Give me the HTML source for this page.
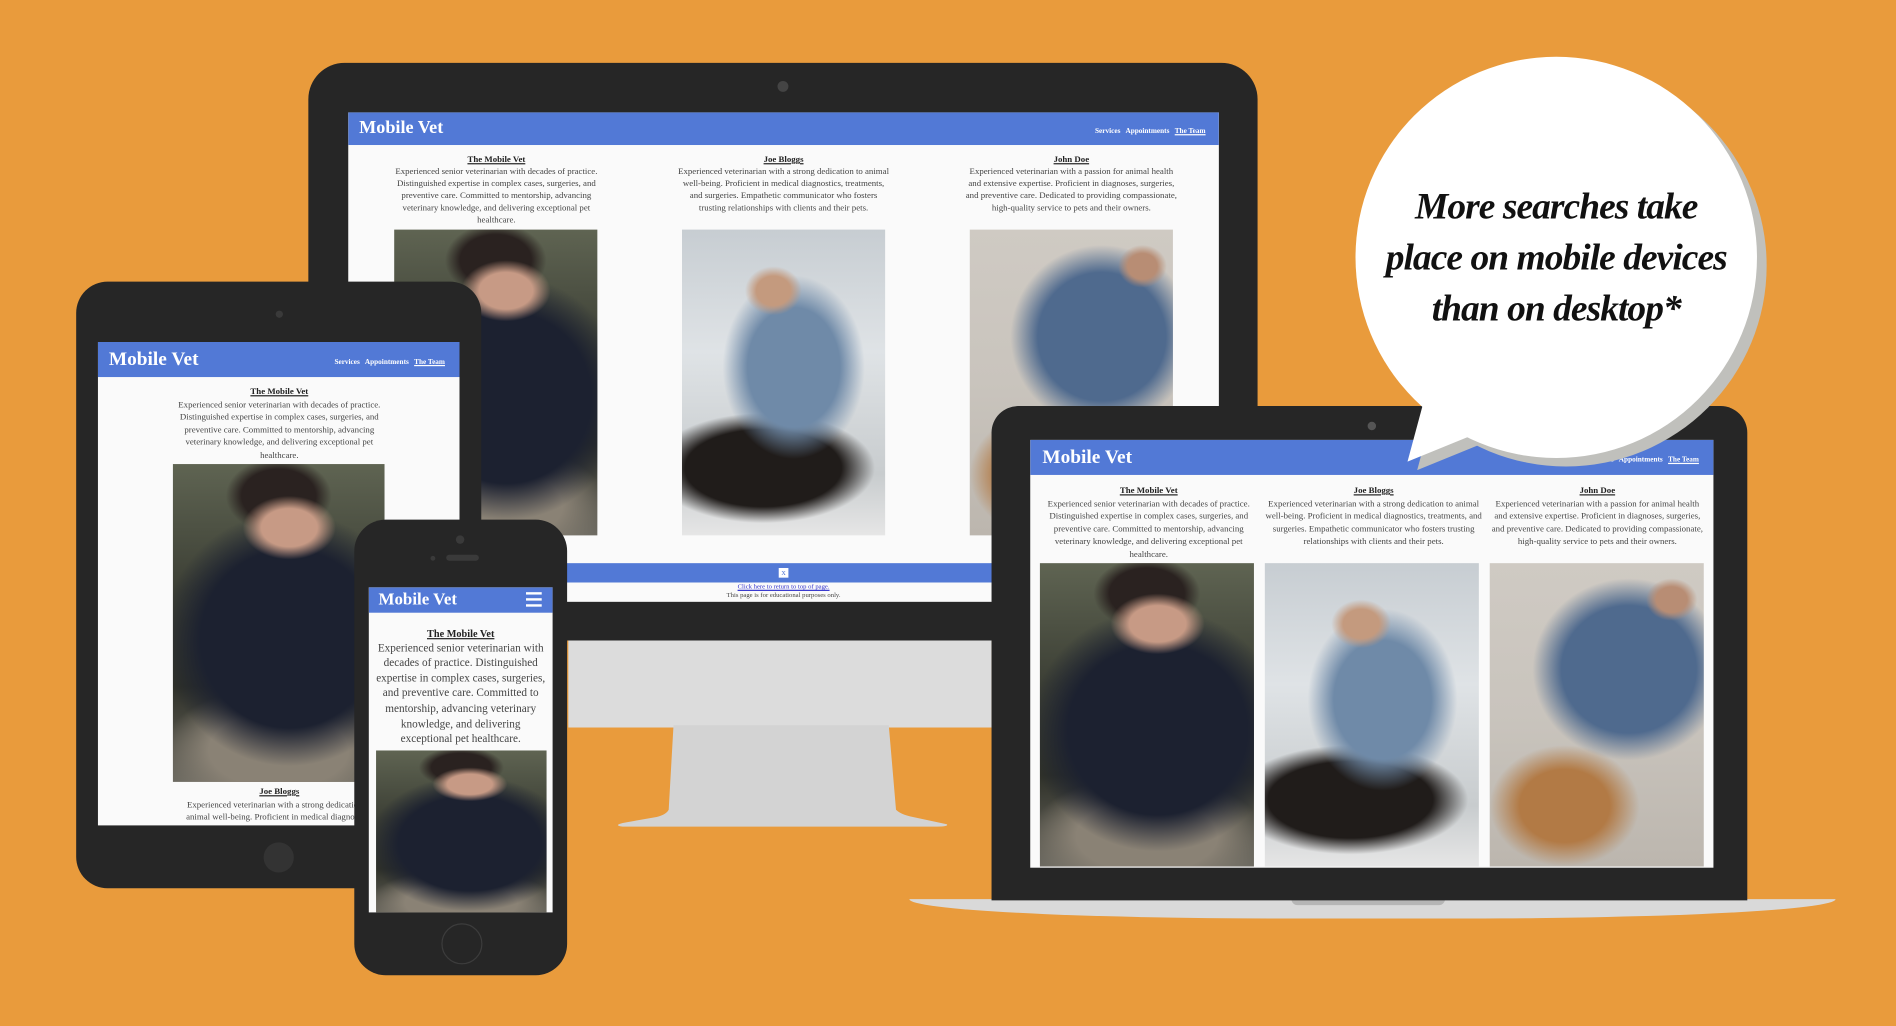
<!DOCTYPE html>
<html><head><meta charset="utf-8"><style>
*{margin:0;padding:0;box-sizing:border-box}
html,body{width:1896px;height:1026px;overflow:hidden;background:#E99B3C}
#s{position:absolute;left:0;top:0;width:1568px;height:849px;transform:scale(1.2092,1.2085);transform-origin:0 0;font-family:"Liberation Serif",serif}
.a{position:absolute}
.bez{background:#262626}
.scr{background:#fafafa;overflow:hidden}
.hd{position:absolute;left:0;right:0;top:0;background:#5279d6;color:#fff;font-weight:bold}
.nav{position:absolute;color:#fff;font-weight:bold;white-space:nowrap}
.nav u{text-decoration:underline}
.col{position:absolute;text-align:center;color:#444}
.col b{display:block;color:#222;text-decoration:underline}
.i1{background:
radial-gradient(ellipse 22% 10% at 55% 20%,#c79a85 0 60%,transparent 100%),
radial-gradient(ellipse 25% 12% at 50% 10%,#2a2220 0 70%,transparent 100%),
radial-gradient(ellipse 60% 40% at 55% 55%,#1c2130 0 70%,transparent 100%),
radial-gradient(ellipse 55% 20% at 50% 90%,#8a8275 0 60%,transparent 100%),
linear-gradient(180deg,#5f6452 0%,#3c3f35 40%,#2f3129 70%,#6e6b62 100%)}
.i2{background:
radial-gradient(ellipse 14% 8% at 45% 20%,#c49a7e 0 60%,transparent 100%),
radial-gradient(ellipse 35% 30% at 55% 45%,#6f8aa8 0 65%,transparent 100%),
radial-gradient(ellipse 55% 18% at 40% 78%,#201c1a 0 70%,transparent 100%),
radial-gradient(ellipse 15% 8% at 20% 75%,#d6dbe3 0 60%,transparent 100%),
linear-gradient(180deg,#c7cdd2 0%,#dfe3e6 40%,#c8ccce 80%,#e6e6e6 100%)}
.i3{background:
radial-gradient(ellipse 12% 7% at 85% 12%,#b88d74 0 60%,transparent 100%),
radial-gradient(ellipse 45% 30% at 65% 35%,#4f6a8e 0 70%,transparent 100%),
radial-gradient(ellipse 35% 20% at 35% 80%,#b27a45 0 60%,transparent 100%),
linear-gradient(180deg,#cfcac3 0%,#c9c4bd 50%,#bcb6ae 100%)}
.t{font-size:7.3px;line-height:10px}
</style></head><body><div id="s">

<!-- desktop -->
<div class="a" style="left:470px;top:526px;width:350px;height:76px;background:#dcdcdc"></div>
<svg class="a" style="left:505px;top:600px" width="285" height="90"><path d="M52 0 L230 0 L236 70 Q240 74 250 76 L278 82 Q280 84 270 84 L10 84 Q2 83 10 81 L38 76 Q46 74 48 70 Z" fill="#d3d3d3"/></svg>
<div class="a bez" style="left:255px;top:52px;width:785px;height:478px;border-radius:30px 30px 4px 4px"></div>
<div class="a" style="left:643px;top:67px;width:9px;height:9px;border-radius:50%;background:#444"></div>
<div class="a scr" style="left:288px;top:93px;width:720px;height:405px">
 <div class="hd" style="height:27px;font-size:15px;line-height:27px;padding-left:9px">Mobile Vet</div>
 <div class="nav" style="right:11px;top:13px;font-size:6px">Services &nbsp; Appointments &nbsp; <u>The Team</u></div>
 <div class="col t" style="left:35px;width:175px;top:34px"><b>The Mobile Vet</b>Experienced senior veterinarian with decades of practice. Distinguished expertise in complex cases, surgeries, and preventive care. Committed to mentorship, advancing veterinary knowledge, and delivering exceptional pet healthcare.</div>
 <div class="col t" style="left:272px;width:176px;top:34px"><b>Joe Bloggs</b>Experienced veterinarian with a strong dedication to animal well-being. Proficient in medical diagnostics, treatments, and surgeries. Empathetic communicator who fosters trusting relationships with clients and their pets.</div>
 <div class="col t" style="left:510px;width:176px;top:34px"><b>John Doe</b>Experienced veterinarian with a passion for animal health and extensive expertise. Proficient in diagnoses, surgeries, and preventive care. Dedicated to providing compassionate, high-quality service to pets and their owners.</div>
 <div class="a i1" style="left:38px;top:97px;width:168px;height:253px"></div>
 <div class="a i2" style="left:276px;top:97px;width:168px;height:253px"></div>
 <div class="a i3" style="left:514px;top:97px;width:168px;height:253px"></div>
 <div class="a" style="left:0;right:0;top:373px;height:16px;background:#5279d6"></div>
 <div class="a" style="left:356px;top:377px;width:8px;height:8px;background:#fff;color:#5279d6;font-size:7px;line-height:8px;text-align:center">x</div>
 <div class="a" style="left:0;right:0;top:390px;text-align:center;font-size:5.5px;line-height:7px;color:#444"><span style="color:#33c;text-decoration:underline">Click here to return to top of page.</span><br>This page is for educational purposes only.</div>
</div>

<!-- tablet -->
<div class="a bez" style="left:63px;top:233px;width:335px;height:502px;border-radius:26px"></div>
<div class="a" style="left:228px;top:257px;width:6px;height:6px;border-radius:50%;background:#3a3a3a"></div>
<div class="a" style="left:218px;top:697px;width:25px;height:25px;border-radius:50%;background:#333"></div>
<div class="a scr" style="left:81px;top:283px;width:299px;height:400px">
 <div class="hd" style="height:29px;font-size:16px;line-height:29px;padding-left:9px">Mobile Vet</div>
 <div class="nav" style="right:12px;top:14px;font-size:6px">Services &nbsp; Appointments &nbsp; <u>The Team</u></div>
 <div class="col t" style="left:62px;width:176px;top:36px;line-height:10.5px"><b>The Mobile Vet</b>Experienced senior veterinarian with decades of practice. Distinguished expertise in complex cases, surgeries, and preventive care. Committed to mentorship, advancing veterinary knowledge, and delivering exceptional pet healthcare.</div>
 <div class="a i1" style="left:62px;top:101px;width:175px;height:263px"></div>
 <div class="col t" style="left:62px;width:176px;top:367px;line-height:10.5px;white-space:nowrap"><b>Joe Bloggs</b>Experienced veterinarian with a strong dedication to<br>animal well-being. Proficient in medical diagnostics,</div>
</div>

<!-- phone -->
<div class="a bez" style="left:293px;top:430px;width:176px;height:377px;border-radius:26px"></div>
<div class="a" style="left:377px;top:443px;width:7px;height:7px;border-radius:50%;background:#3a3a3a"></div>
<div class="a" style="left:369px;top:459px;width:27px;height:5px;border-radius:3px;background:#3a3a3a"></div>
<div class="a" style="left:356px;top:460px;width:4px;height:4px;border-radius:50%;background:#3a3a3a"></div>
<div class="a" style="left:365px;top:764px;width:34px;height:34px;border-radius:50%;border:1.5px solid #3c3c3c"></div>
<div class="a scr" style="left:305px;top:486px;width:152px;height:269px">
 <div class="hd" style="height:21px;font-size:14px;line-height:21px;padding-left:8px">Mobile Vet</div>
 <div class="a" style="left:130px;top:4px;width:13px;height:12px;border-top:2px solid #fff;border-bottom:2px solid #fff"><div style="margin-top:3px;height:2px;background:#fff"></div></div>
 <div class="col" style="left:4px;width:144px;top:32px;font-size:9.3px;line-height:12.6px"><b style="font-size:8.5px">The Mobile Vet</b>Experienced senior veterinarian with decades of practice. Distinguished expertise in complex cases, surgeries, and preventive care. Committed to mentorship, advancing veterinary knowledge, and delivering exceptional pet healthcare.</div>
 <div class="a i1" style="left:6px;top:135px;width:141px;height:140px"></div>
</div>

<!-- laptop -->
<div class="a" style="left:752px;top:744px;width:766px;height:16px;background:#d9d9d9;border-radius:0 0 40% 40%/0 0 100% 100%"></div>
<div class="a" style="left:1068px;top:744px;width:127px;height:5px;background:#b5b5b5;border-radius:0 0 6px 6px"></div>
<div class="a bez" style="left:820px;top:336px;width:625px;height:409px;border-radius:22px 22px 0 0"></div>
<div class="a" style="left:1131px;top:349px;width:7px;height:7px;border-radius:50%;background:#555"></div>
<div class="a scr" style="left:852px;top:364px;width:565px;height:354px">
 <div class="hd" style="height:29px;font-size:16px;line-height:29px;padding-left:10px">Mobile Vet</div>
 <div class="nav" style="right:12px;top:14px;font-size:6px">Services &nbsp; Appointments &nbsp; <u>The Team</u></div>
 <div class="col t" style="left:9px;width:178px;top:37px;line-height:10.5px"><b>The Mobile Vet</b>Experienced senior veterinarian with decades of practice. Distinguished expertise in complex cases, surgeries, and preventive care. Committed to mentorship, advancing veterinary knowledge, and delivering exceptional pet healthcare.</div>
 <div class="col t" style="left:194px;width:180px;top:37px;line-height:10.5px"><b>Joe Bloggs</b>Experienced veterinarian with a strong dedication to animal well-being. Proficient in medical diagnostics, treatments, and surgeries. Empathetic communicator who fosters trusting relationships with clients and their pets.</div>
 <div class="col t" style="left:380px;width:178px;top:37px;line-height:10.5px"><b>John Doe</b>Experienced veterinarian with a passion for animal health and extensive expertise. Proficient in diagnoses, surgeries, and preventive care. Dedicated to providing compassionate, high-quality service to pets and their owners.</div>
 <div class="a i1" style="left:8px;top:102px;width:177px;height:251px"></div>
 <div class="a i2" style="left:194px;top:102px;width:177px;height:251px"></div>
 <div class="a i3" style="left:380px;top:102px;width:177px;height:251px"></div>
</div>

<!-- bubble -->
<svg class="a" style="left:1100px;top:30px" width="380" height="370">
 <g transform="translate(8,7)" fill="#c0c0bc"><circle cx="187" cy="183" r="166"/><path d="M78 300 L64 352 L118 330 Z"/></g>
 <g fill="#fff"><circle cx="187" cy="183" r="166"/><path d="M78 300 L64 352 L118 330 Z"/></g>
</svg>
<div class="a" style="left:1117px;top:150px;width:340px;text-align:center;font-family:'Liberation Serif',serif;font-style:italic;font-weight:bold;font-size:31px;line-height:42px;color:#111;letter-spacing:-0.8px;white-space:nowrap">More searches take<br>place on mobile devices<br>than on desktop*</div>

</div></body></html>
